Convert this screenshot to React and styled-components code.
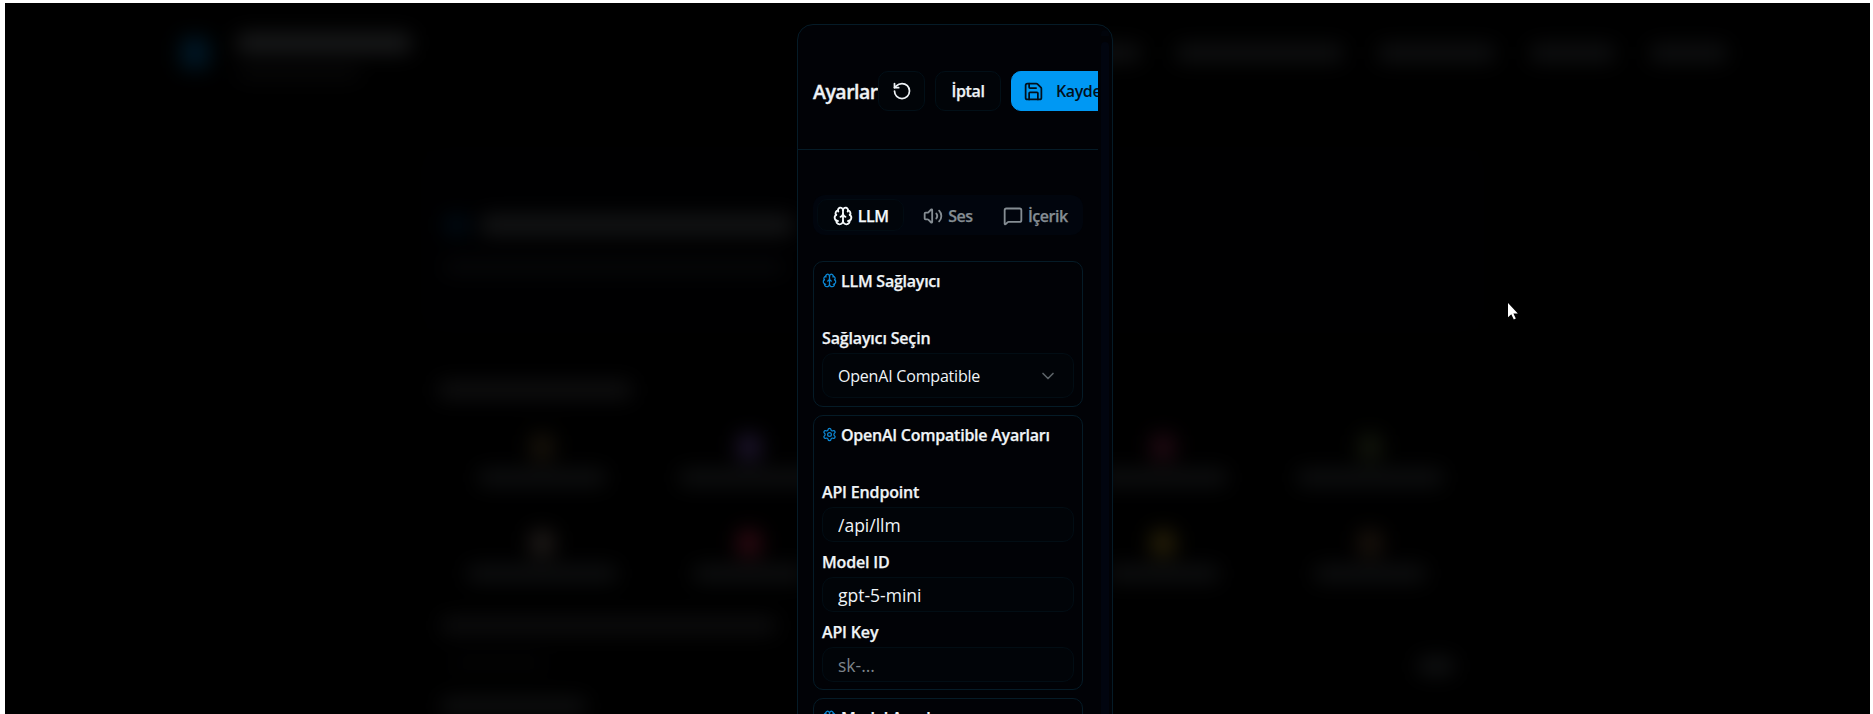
import React from "react";
import styled, { createGlobalStyle } from "styled-components";
import { Brain, Volume2, MessageSquare, RotateCcw, Save, Settings, ChevronDown } from "lucide-react";

const GlobalStyle = createGlobalStyle`
  * { box-sizing: border-box; }
  html, body { margin: 0; background: #fff; overflow: hidden; }
  body, input, button { font-family: "Open Sans", "Noto Sans", sans-serif; }
`;

const Frame = styled.div`
  width: 1873px;
  height: 714px;
  padding: 3px 3px 0 5px;
  background: #fff;
  overflow: hidden;
`;

const Screen = styled.div`
  position: relative;
  height: 711px;
  background: #000;
  overflow: hidden;
`;

/* ---- dimmed page behind the dialog ---- */
const Backdrop = styled.div`
  height: 711px;
  overflow: hidden;
  filter: blur(10px);
`;

const Bar = styled.div`
  flex: none;
  width: ${(p) => p.$w}px;
  height: ${(p) => p.$h || 15}px;
  border-radius: 6px;
  background: ${(p) => p.$c || "#0e0f10"};
`;

const PageHeader = styled.div`
  display: flex;
  align-items: center;
  justify-content: space-between;
  height: 100px;
  padding: 0 143px 0 175px;
`;

const Brand = styled.div`
  display: flex;
  align-items: center;
  gap: 27px;
`;

const BrandText = styled.div`
  display: flex;
  flex-direction: column;
  gap: 14px;
  padding-top: 5px;
`;

const Nav = styled.div`
  display: flex;
  gap: 35px;
`;

const PageMain = styled.div`
  width: 1055px;
  margin: 48px 0 0 420px;
`;

const Intro = styled.div`
  height: 178px;
  padding: 63px 18px 0;
  border: 1px solid #010305;
  border-radius: 16px;
  background: #000001;
`;

const IntroTitle = styled.div`
  display: flex;
  align-items: center;
  gap: 12px;
  margin-bottom: 26px;
`;

const Categories = styled.div`
  padding: 52px 13px 0;
`;

const CategoryGrid = styled.div`
  display: grid;
  grid-template-columns: repeat(5, 207px);
  margin-top: 35px;
  row-gap: 38px;
`;

const Category = styled.div`
  display: flex;
  flex-direction: column;
  align-items: center;
  gap: 9px;
  height: 58px;
`;

const Stack = styled.div`
  display: flex;
  flex-direction: column;
  gap: 23px;
  padding: 29px 16px 0;
`;

const InputRow = styled.div`
  display: flex;
  justify-content: space-between;
  padding: 0 10px;
`;

/* ---- settings dialog ---- */
const Overlay = styled.div`
  position: absolute;
  inset: 0;
  padding: 21px 0 0 792px;
`;

const Dialog = styled.div`
  display: flex;
  width: 316px;
  height: 760px;
  border: 1px solid #051b27;
  border-radius: 16px;
  background: #010206;
  overflow: hidden;
`;

const DialogBody = styled.div`
  width: 300px;
  flex: none;
  overflow: hidden;
`;

const ScrollTrack = styled.div`
  flex: 1;
  display: flex;
  flex-direction: column;
  align-items: center;
  padding-top: 5px;
  gap: 6px;
`;

const ScrollArrow = styled.div`
  width: 8px;
  height: 6px;
  border-radius: 4px 4px 0 0;
  background: #01040b;
`;

const ScrollThumb = styled.div`
  width: 8px;
  flex: 1;
  border-radius: 4px 4px 0 0;
  background: #01050f;
`;

const DialogHeader = styled.div`
  display: flex;
  align-items: center;
  height: 125px;
  padding: 8px 0 0 15px;
  border-bottom: 1px solid #051b27;
`;

const Title = styled.h2`
  flex: none;
  width: 65px;
  margin: 0;
  padding-top: 2px;
  font-size: 19.5px;
  line-height: 28px;
  font-weight: 600;
  -webkit-text-stroke: 0.35px currentColor;
  letter-spacing: -0.5px;
  color: #eef2f5;
  white-space: nowrap;
`;

const Actions = styled.div`
  display: flex;
  flex: none;
  gap: 10px;
`;

const Button = styled.button`
  display: flex;
  align-items: center;
  justify-content: ${(p) => (p.$primary ? "flex-start" : "center")};
  gap: 12px;
  flex: none;
  width: ${(p) => p.$w}px;
  height: 40px;
  padding: 0 ${(p) => (p.$primary ? 11 : 0)}px;
  border: 1px solid ${(p) => (p.$primary ? "#0098f3" : "#020f17")};
  border-radius: 10px;
  background: ${(p) => (p.$primary ? "#0098f3" : "#010408")};
  color: ${(p) => (p.$primary ? "#02101c" : "#eef2f5")};
  font-size: 16px;
  font-weight: 600;
  -webkit-text-stroke: ${(p) => (p.$primary ? 0 : 0.25)}px currentColor;
  letter-spacing: -0.4px;
  white-space: nowrap;
`;

const DialogContent = styled.div`
  display: flex;
  flex-direction: column;
  padding: 45px 15px 0;
`;

const Tabs = styled.div`
  display: grid;
  grid-template-columns: repeat(3, 1fr);
  height: 40px;
  padding: 4px;
  margin-bottom: 26px;
  border-radius: 12px;
  background: #01050d;
`;

const Tab = styled.div`
  display: flex;
  align-items: center;
  justify-content: center;
  gap: 5px;
  padding-top: 1px;
  border: 1px solid ${(p) => (p.$active ? "#020b12" : "transparent")};
  border-radius: 10px;
  background: ${(p) => (p.$active ? "#01050a" : "transparent")};
  color: ${(p) => (p.$active ? "#f4f8fa" : "#858d93")};
  font-size: 16px;
  font-weight: 600;
  -webkit-text-stroke: 0.25px currentColor;
  letter-spacing: -0.45px;
  white-space: nowrap;
`;

const Card = styled.section`
  height: ${(p) => p.$h}px;
  margin-bottom: 8px;
  padding: 8px;
  border: 1px solid #051b27;
  border-radius: 10px;
`;

const CardTitle = styled.h3`
  display: flex;
  align-items: center;
  gap: 4px;
  height: 20px;
  margin: 0 0 37px;
  font-size: 16px;
  font-weight: 600;
  -webkit-text-stroke: 0.25px currentColor;
  letter-spacing: -0.24px;
  color: #f0f4f7;
  white-space: nowrap;
  svg { color: #0c87d4; }
  span { padding-top: 1px; }
`;

const Label = styled.label`
  display: block;
  height: 21px;
  margin-bottom: 5px;
  padding-top: 1px;
  font-size: 16px;
  line-height: 20px;
  font-weight: 600;
  -webkit-text-stroke: 0.25px currentColor;
  letter-spacing: -0.16px;
  color: #f0f4f7;
`;

const Select = styled.div`
  display: flex;
  align-items: center;
  justify-content: space-between;
  height: 45px;
  padding: 0 15px;
  border: 1px solid #020d14;
  border-radius: 11px;
  background: #010408;
  color: #f0f4f7;
  font-size: 16px;
  letter-spacing: -0.2px;
  svg { color: #5c6368; }
`;

const Input = styled.input`
  display: block;
  width: 100%;
  height: 35px;
  margin-bottom: 9px;
  padding: 1px 15px 0;
  border: 1px solid #020d14;
  border-radius: 11px;
  outline: none;
  background: #010408;
  color: #f0f4f7;
  font-size: 17.5px;
  letter-spacing: 0;
  &::placeholder { color: #7d858b; opacity: 1; }
`;

const Pointer = styled.svg`
  position: absolute;
  left: 1502px;
  top: 299px;
`;

const categories = [
  { icon: "#17120a", w: 128 }, { icon: "#1b132a", w: 140 }, { icon: "#0a0a0a", w: 120 },
  { icon: "#200912", w: 128 }, { icon: "#12150b", w: 146 }, { icon: "#1e1a18", w: 150 },
  { icon: "#2c0911", w: 112 }, { icon: "#0a0a0a", w: 120 }, { icon: "#261f08", w: 112 },
  { icon: "#19120c", w: 112 },
];

const PageBehind = () => (
  <Backdrop aria-hidden="true">
    <PageHeader>
      <Brand>
        <Bar $w={30} $h={32} $c="#001624" />
        <BrandText>
          <Bar $w={174} $h={20} $c="#191a1b" />
          <Bar $w={123} $h={12} $c="#080809" />
        </BrandText>
      </Brand>
      <Nav>
        {[60, 167, 117, 85, 77].map((w, i) => <Bar key={i} $w={w} $h={18} $c="#0f1011" />)}
      </Nav>
    </PageHeader>
    <PageMain>
      <Intro>
        <IntroTitle>
          <Bar $w={25} $h={20} $c="#000b14" />
          <Bar $w={312} $h={20} $c="#141516" />
        </IntroTitle>
        <Bar $w={340} $h={12} $c="#08090b" />
      </Intro>
      <Categories>
        <Bar $w={194} $h={18} $c="#0f0f10" />
        <CategoryGrid>
          {categories.map((c, i) => (
            <Category key={i}>
              <Bar $w={24} $h={26} $c={c.icon} />
              <Bar $w={c.w} $h={17} />
            </Category>
          ))}
        </CategoryGrid>
      </Categories>
      <Stack>
        <Bar $w={335} $h={17} $c="#0d0d0e" />
        <InputRow>
          <Bar $w={95} $h={12} $c="#040405" />
          <Bar $w={36} $h={18} $c="#101112" />
        </InputRow>
        <Bar $w={145} $h={16} $c="#0f1011" />
      </Stack>
    </PageMain>
  </Backdrop>
);

export default function App() {
  return (
    <>
      <GlobalStyle />
      <Frame>
        <Screen>
          <PageBehind />
          <Overlay>
            <Dialog role="dialog">
              <DialogBody>
                <DialogHeader>
                  <Title>Ayarlar</Title>
                  <Actions>
                    <Button $w={47} aria-label="reset"><RotateCcw size={20} strokeWidth={2.1} /></Button>
                    <Button $w={66}>İptal</Button>
                    <Button $w={120} $primary><Save size={21} strokeWidth={2} />Kaydet</Button>
                  </Actions>
                </DialogHeader>
                <DialogContent>
                  <Tabs>
                    <Tab $active><Brain size={20} strokeWidth={2.2} />LLM</Tab>
                    <Tab><Volume2 size={20} strokeWidth={2.2} />Ses</Tab>
                    <Tab><MessageSquare size={20} strokeWidth={2.2} />İçerik</Tab>
                  </Tabs>
                  <Card $h={146}>
                    <CardTitle><Brain size={15} /><span>LLM Sağlayıcı</span></CardTitle>
                    <Label>Sağlayıcı Seçin</Label>
                    <Select>OpenAI Compatible<ChevronDown size={20} /></Select>
                  </Card>
                  <Card $h={275}>
                    <CardTitle><Settings size={15} /><span>OpenAI Compatible Ayarları</span></CardTitle>
                    <Label>API Endpoint</Label>
                    <Input readOnly value="/api/llm" />
                    <Label>Model ID</Label>
                    <Input readOnly value="gpt-5-mini" />
                    <Label>API Key</Label>
                    <Input readOnly placeholder="sk-..." />
                  </Card>
                  <Card $h={146}>
                    <CardTitle><Brain size={15} /><span>Model Ayarları</span></CardTitle>
                  </Card>
                </DialogContent>
              </DialogBody>
              <ScrollTrack>
                <ScrollArrow />
                <ScrollThumb />
              </ScrollTrack>
            </Dialog>
          </Overlay>
          <Pointer width="13" height="20" viewBox="0 0 13 20">
            <path d="M1 1v14.2l3.3-3 2.5 5.2 2-0.9-2.4-5h4.4z" fill="#fff" />
          </Pointer>
        </Screen>
      </Frame>
    </>
  );
}
